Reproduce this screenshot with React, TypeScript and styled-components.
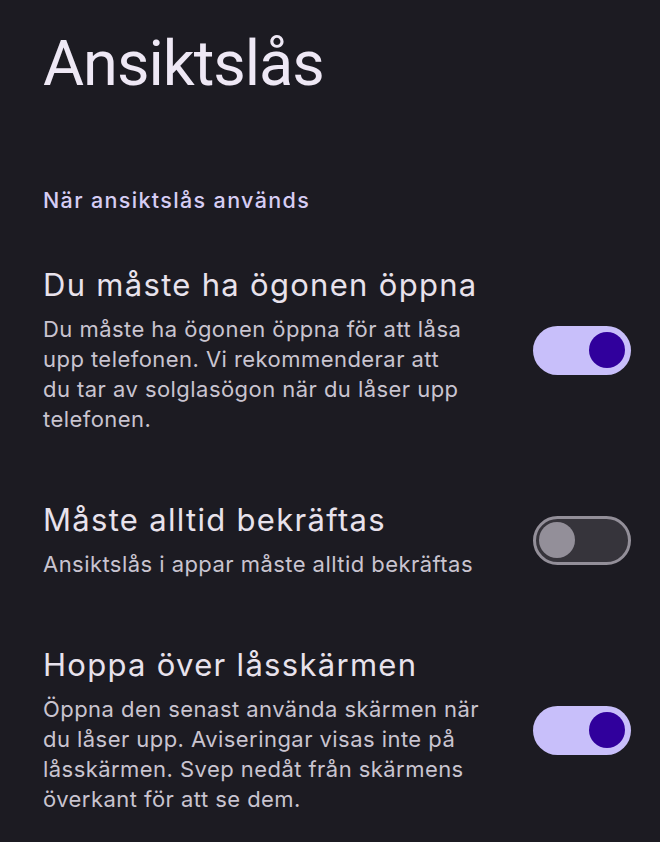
import React, { useState } from 'react';
import styled, { createGlobalStyle } from 'styled-components';

const GlobalStyle = createGlobalStyle`
  html, body {
    margin: 0;
    padding: 0;
    background: #1c1b22;
  }
  body {
    font-family: Inter, Roboto, sans-serif;
    -webkit-font-smoothing: antialiased;
  }
`;

type Setting = {
  id: string;
  title: string;
  // lines as the phone breaks them
  description: string[];
  on: boolean;
};

const settings: Setting[] = [
  {
    id: 'eyes',
    title: 'Du måste ha ögonen öppna',
    description: [
      'Du måste ha ögonen öppna för att låsa',
      'upp telefonen. Vi rekommenderar att',
      'du tar av solglasögon när du låser upp',
      'telefonen.',
    ],
    on: true,
  },
  {
    id: 'confirm',
    title: 'Måste alltid bekräftas',
    description: ['Ansiktslås i appar måste alltid bekräftas'],
    on: false,
  },
  {
    id: 'skip',
    title: 'Hoppa över låsskärmen',
    description: [
      'Öppna den senast använda skärmen när',
      'du låser upp. Aviseringar visas inte på',
      'låsskärmen. Svep nedåt från skärmens',
      'överkant för att se dem.',
    ],
    on: true,
  },
];

function Toggle({ on, onClick }: { on: boolean; onClick: () => void }) {
  return (
    <Track $on={on} onClick={onClick} role="switch" aria-checked={on}>
      <Thumb $on={on} />
    </Track>
  );
}

export default function App() {
  const [state, setState] = useState(() => settings.map((s) => s.on));

  const flip = (i: number) =>
    setState((prev) => prev.map((v, j) => (j === i ? !v : v)));

  return (
    <Page>
      <GlobalStyle />
      <Title>Ansiktslås</Title>
      <SectionHeader>När ansiktslås används</SectionHeader>
      <List>
        {settings.map((s, i) => (
          <Row key={s.id}>
            <Text>
              <RowTitle>{s.title}</RowTitle>
              <RowDescription>
                {s.description.map((line) => (
                  <Line key={line}>{line}</Line>
                ))}
              </RowDescription>
            </Text>
            <Toggle on={state[i]} onClick={() => flip(i)} />
          </Row>
        ))}
      </List>
    </Page>
  );
}

const Page = styled.div`
  min-height: 842px;
  box-sizing: border-box;
  padding: 24px 29px 0 43px;
  background: #1c1b22;
`;

const Title = styled.h1`
  margin: 0;
  font-family: Roboto, sans-serif;
  font-size: 63px;
  font-weight: 400;
  line-height: 80px;
  color: #eee8f5;
  letter-spacing: -1px;
`;

const SectionHeader = styled.h2`
  margin: 82px 0 0;
  font-size: 21.5px;
  font-weight: 500;
  line-height: 28px;
  letter-spacing: 1.35px;
  color: #d6cdf4;
`;

const List = styled.div`
  display: flex;
  flex-direction: column;
  gap: 67px;
  margin-top: 52px;
`;

const Row = styled.div`
  display: flex;
  align-items: center;
  justify-content: space-between;
  gap: 16px;
`;

const Text = styled.div`
  display: flex;
  flex-direction: column;
  gap: 10px;
  min-width: 0;
`;

const RowTitle = styled.div`
  font-size: 31px;
  line-height: 38px;
  letter-spacing: 1.3px;
  color: #e8e2ec;
  white-space: nowrap;
`;

const RowDescription = styled.div`
  display: flex;
  flex-direction: column;
  font-size: 22px;
  line-height: 30px;
  letter-spacing: 0.45px;
  color: #c9c4d0;
`;

const Line = styled.span`
  white-space: nowrap;
`;

const Track = styled.button<{ $on: boolean }>`
  flex: none;
  display: flex;
  align-items: center;
  justify-content: ${(p) => (p.$on ? 'flex-end' : 'flex-start')};
  width: 98px;
  height: 49px;
  box-sizing: border-box;
  padding: 0 ${(p) => (p.$on ? 6 : 3)}px;
  border-radius: 25px;
  border: ${(p) => (p.$on ? 'none' : '3px solid #938f99')};
  background: ${(p) => (p.$on ? '#c8bffa' : '#36343b')};
  cursor: pointer;
`;

const Thumb = styled.span<{ $on: boolean }>`
  width: 36px;
  height: 36px;
  border-radius: 50%;
  background: ${(p) => (p.$on ? '#30009c' : '#938f99')};
`;
